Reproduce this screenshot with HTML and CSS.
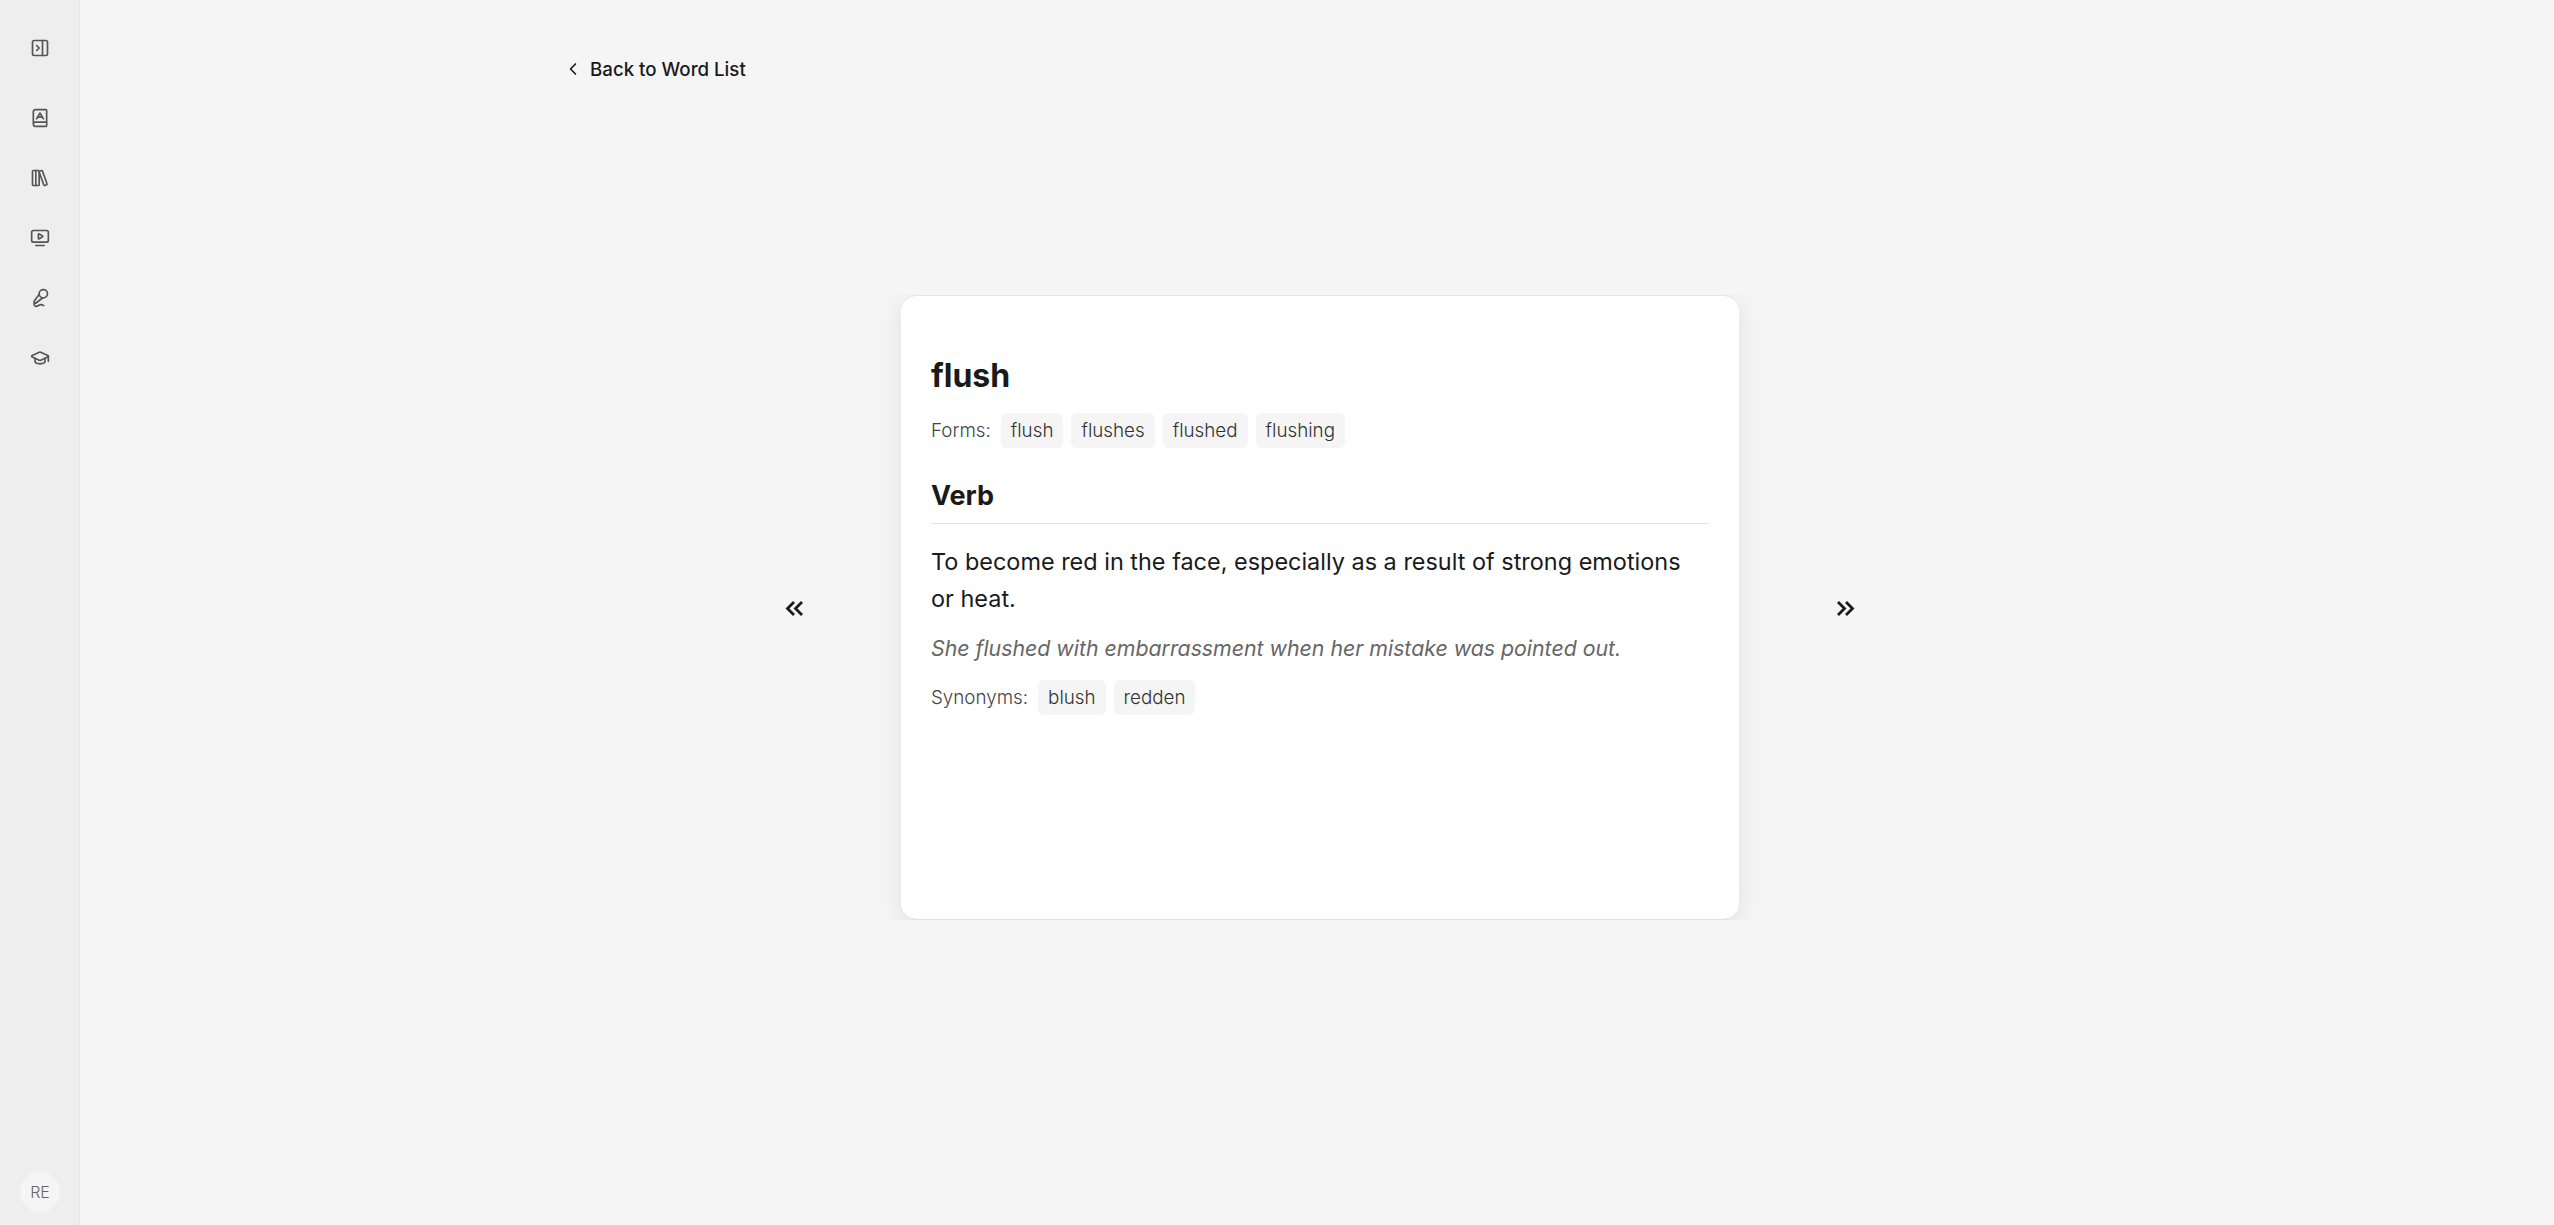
FILE: index.html
```html
<!DOCTYPE html>
<html lang="en">
<head>
<meta charset="utf-8">
<title>flush</title>
<link rel="stylesheet" href="styles.css">
</head>
<body>
<div class="app">
  <aside class="sidebar">
    <a class="nav-item toggle"><svg viewBox="0 0 24 24" class="icon"><rect x="3" y="3" width="18" height="18" rx="2"/><path d="M15 3v18"/><path d="m8 9 3 3-3 3"/></svg></a>
    <nav class="nav">
      <a class="nav-item"><svg viewBox="0 0 24 24" class="icon"><path d="M4 19.500v-15A2.500 2.500 0 0 1 6.500 2H19a1 1 0 0 1 1 1v18a1 1 0 0 1-1 1H6.500a1 1 0 0 1 0-5H20"/><path d="m8 13 4-7 4 7"/><path d="M9.100 11h5.700"/></svg></a>
      <a class="nav-item"><svg viewBox="0 0 24 24" class="icon"><rect width="8" height="18" x="3" y="3" rx="1"/><path d="M7 3v18"/><path d="M20.400 18.900c.2.500-.1 1.100-.6 1.300l-1.900.7c-.5.2-1.100-.1-1.300-.6L11.100 5.100c-.2-.5.1-1.100.6-1.300l1.900-.7c.5-.2 1.100.1 1.300.6Z"/></svg></a>
      <a class="nav-item"><svg viewBox="0 0 24 24" class="icon"><path d="M15.033 9.440a.647.647 0 0 1 0 1.120l-4.065 2.352a.645.645 0 0 1-.968-.56V7.648a.645.645 0 0 1 .967-.56z"/><path d="M7 21h10"/><rect width="20" height="14" x="2" y="3" rx="2"/></svg></a>
      <a class="nav-item"><svg viewBox="0 0 24 24" class="icon"><path d="m11 7.601-5.994 8.190a1 1 0 0 0 .1 1.298l.817.818a1 1 0 0 0 1.314.087L15.090 12"/><path d="M16.500 21.174C15.500 20.500 14.372 20 13 20c-2.058 0-3.928 2.356-6 2-2.072-.356-2.775-3.369-1.500-4.500"/><circle cx="16" cy="7" r="5"/></svg></a>
      <a class="nav-item"><svg viewBox="0 0 24 24" class="icon"><path d="M21.420 10.922a1 1 0 0 0-.019-1.838L12.830 5.180a2 2 0 0 0-1.660 0L2.600 9.080a1 1 0 0 0 0 1.832l8.570 3.908a2 2 0 0 0 1.660 0z"/><path d="M22 10v6"/><path d="M6 12.500V16a6 3 0 0 0 12 0v-3.500"/></svg></a>
    </nav>
    <div class="avatar">RE</div>
  </aside>
  <main class="main">
    <a class="back"><svg viewBox="0 0 24 24" class="back-icon"><path d="m15 18-6-6 6-6"/></svg><span>Back to Word List</span></a>
    <div class="stage">
      <button class="arrow"><svg viewBox="0 0 24 24"><path d="M11 6l-6.500 6.500L11 19M19 6l-6.500 6.500L19 19"/></svg></button>
      <div class="card-clip">
        <article class="card">
          <h1 class="word">flush</h1>
          <div class="tag-row forms">
            <span class="tag-label">Forms:</span>
            <span class="tags"><span class="tag">flush</span><span class="tag">flushes</span><span class="tag">flushed</span><span class="tag">flushing</span></span>
          </div>
          <h2 class="pos">Verb</h2>
          <p class="definition">To become red in the face, especially as a result of strong emotions or heat.</p>
          <p class="example">She flushed with embarrassment when her mistake was pointed out.</p>
          <div class="tag-row">
            <span class="tag-label">Synonyms:</span>
            <span class="tags"><span class="tag">blush</span><span class="tag">redden</span></span>
          </div>
        </article>
      </div>
      <button class="arrow"><svg viewBox="0 0 24 24"><path d="M11 6l-6.500 6.500L11 19M19 6l-6.500 6.500L19 19"/></svg></button>
    </div>
  </main>
</div>
</body>
</html>
```

FILE: styles.css
```css
* { box-sizing: border-box; }
html, body { margin: 0; height: 100%; }
body {
  background: #f5f5f5;
  color: #1a1a1a;
  font-family: Inter, "Open Sans", sans-serif;
  overflow: hidden;
}
.app { display: flex; height: 1225px; }

.sidebar {
  width: 80px;
  flex: none;
  background: #eeeeee;
  border-right: 1px solid #e5e5e5;
  display: flex;
  flex-direction: column;
  align-items: center;
  padding: 18px 0 13px 1px;
}
.nav-item { display: flex; align-items: center; justify-content: center; width: 60px; height: 60px; }
.toggle { margin-bottom: 10px; }
.nav { display: flex; flex-direction: column; flex: 1; }
.icon { width: 20px; height: 20px; fill: none; stroke: #555; stroke-width: 2; stroke-linecap: round; stroke-linejoin: round; }
.avatar {
  width: 40px; height: 40px; border-radius: 50%;
  background: #f5f5f5; color: #666;
  display: flex; align-items: center; justify-content: center;
  font-size: 16px; font-weight: 300;
}

.main { flex: 1; display: flex; flex-direction: column; padding-left: 6px; min-width: 0; }
.back {
  display: flex; align-items: center; gap: 7px;
  margin: 55px 0 0 477px;
  height: 28px;
  font-size: 18.700px; font-weight: 500; color: #1a1a1a;
}
.back-icon { width: 20px; height: 20px; fill: none; stroke: #1a1a1a; stroke-width: 2; stroke-linecap: round; stroke-linejoin: round; }

.stage { display: flex; align-items: center; justify-content: center; gap: 94px; margin-top: 212px; }
.arrow { width: 24px; height: 24px; padding: 0; border: 0; background: none; display: flex; }
.arrow:last-child svg { transform: scaleX(-1); }
.arrow svg { width: 24px; height: 24px; fill: none; stroke: #1a1a1a; stroke-width: 2.800; }

.card-clip { clip-path: inset(0 -30px 0 -30px); }
.card {
  width: 838px; height: 625px;
  background: #fff;
  border-top: 1px solid #e5e5e5;
  border-bottom: 1px solid #e0e0e0;
  border-radius: 16px;
  padding: 60px 30px 0;
  box-shadow: 0 4px 24px rgba(0, 0, 0, .09);
}
.word { margin: 0 0 17px; font-size: 32px; line-height: 40px; font-weight: 700; }
.tag-row { display: flex; align-items: center; gap: 10px; }
.tag-label { font-size: 18.800px; font-weight: 350; color: #444; }
.tags { display: flex; gap: 8px; }
.tag { height: 35px; padding: 0 10px; background: #f5f5f5; border-radius: 6px; font-size: 18.800px; font-weight: 350; line-height: 35px; color: #333; }
.pos { margin: 30px 0 0; padding-bottom: 9px; border-bottom: 1px solid #e5e5e5; font-size: 27px; line-height: 36px; font-weight: 700; }
.definition { margin: 19px 0 0; padding-right: 10px; font-size: 23.450px; line-height: 37px; }
.example { margin: 13px 0 0; font-size: 21.300px; line-height: 37px; font-style: italic; color: #666; }
.tag-row:last-child { margin-top: 13px; }
```
